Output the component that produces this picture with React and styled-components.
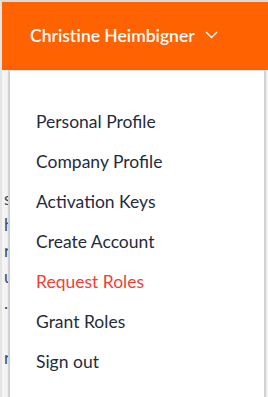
import styled, { createGlobalStyle } from 'styled-components';

const GlobalStyle = createGlobalStyle`
  html, body {
    margin: 0;
    padding: 0;
    background: #ffffff;
  }
  * {
    box-sizing: border-box;
  }
`;

const Frame = styled.div`
  position: relative;
  width: 268px;
  height: 397px;
  overflow: hidden;
  border-top: 2px solid #d9d9d9;
  border-left: 2px solid #e4e4e4;
  background: #ffffff;
  font-family: Lato, 'Noto Sans', sans-serif;
`;

const TopBar = styled.header`
  display: flex;
  align-items: center;
  gap: 10px;
  height: 68px;
  padding: 0 0 2px 28px;
  background: #ff6200;
  color: #ffffff;
  font-size: 17.5px;
  font-weight: 600;
`;

const Backdrop = styled.div`
  display: flex;
  flex-direction: column;
  height: 327px;
  padding: 116px 0 0 2px;
  background: #f4f4f4;
  color: #3a4a66;
  font-size: 17px;
  line-height: 26px;
`;

const BackLine = styled.span`
  display: block;
  height: ${(p) => p.$tall || 26}px;
  white-space: nowrap;
`;

const Menu = styled.nav`
  position: absolute;
  top: 68px;
  left: 6px;
  right: 2px;
  bottom: -4px;
  padding-top: 31px;
  background: #ffffff;
  border: 2px solid #d2d2d2;
  border-top: 1px solid #e6e6e6;
  box-shadow: 0 0 2px rgba(0, 0, 0, 0.08);
`;

const MenuList = styled.ul`
  list-style: none;
  margin: 0;
  padding: 0 0 0 26px;
`;

const MenuItem = styled.li`
  height: 40px;
  line-height: 40px;
  font-size: 17.5px;
  color: ${(p) => (p.$active ? '#ef4136' : '#1f2c3e')};
  cursor: pointer;
  white-space: nowrap;
`;

const Chevron = () => (
  <svg width="13" height="8" viewBox="0 0 13 8" fill="none" stroke="#ffffff" strokeWidth="1.3">
    <path d="M1 1 L6.5 6.5 L12 1" />
  </svg>
);

const items = [
  'Personal Profile',
  'Company Profile',
  'Activation Keys',
  'Create Account',
  'Request Roles',
  'Grant Roles',
  'Sign out',
];

const backLines = [
  { text: 'sha' },
  { text: 'hav' },
  { text: 'ro' },
  { text: 'u' },
  { text: '.' },
  { text: '', tall: 29 },
  { text: 'r' },
];

const App = () => (
  <>
    <GlobalStyle />
    <Frame>
      <TopBar>
        Christine Heimbigner
        <Chevron />
      </TopBar>
      <Backdrop>
        {backLines.map((l, i) => (
          <BackLine key={i} $tall={l.tall}>
            {l.text}
          </BackLine>
        ))}
      </Backdrop>
      <Menu>
        <MenuList>
          {items.map((name) => (
            <MenuItem key={name} $active={name === 'Request Roles'}>
              {name}
            </MenuItem>
          ))}
        </MenuList>
      </Menu>
    </Frame>
  </>
);

export default App;
